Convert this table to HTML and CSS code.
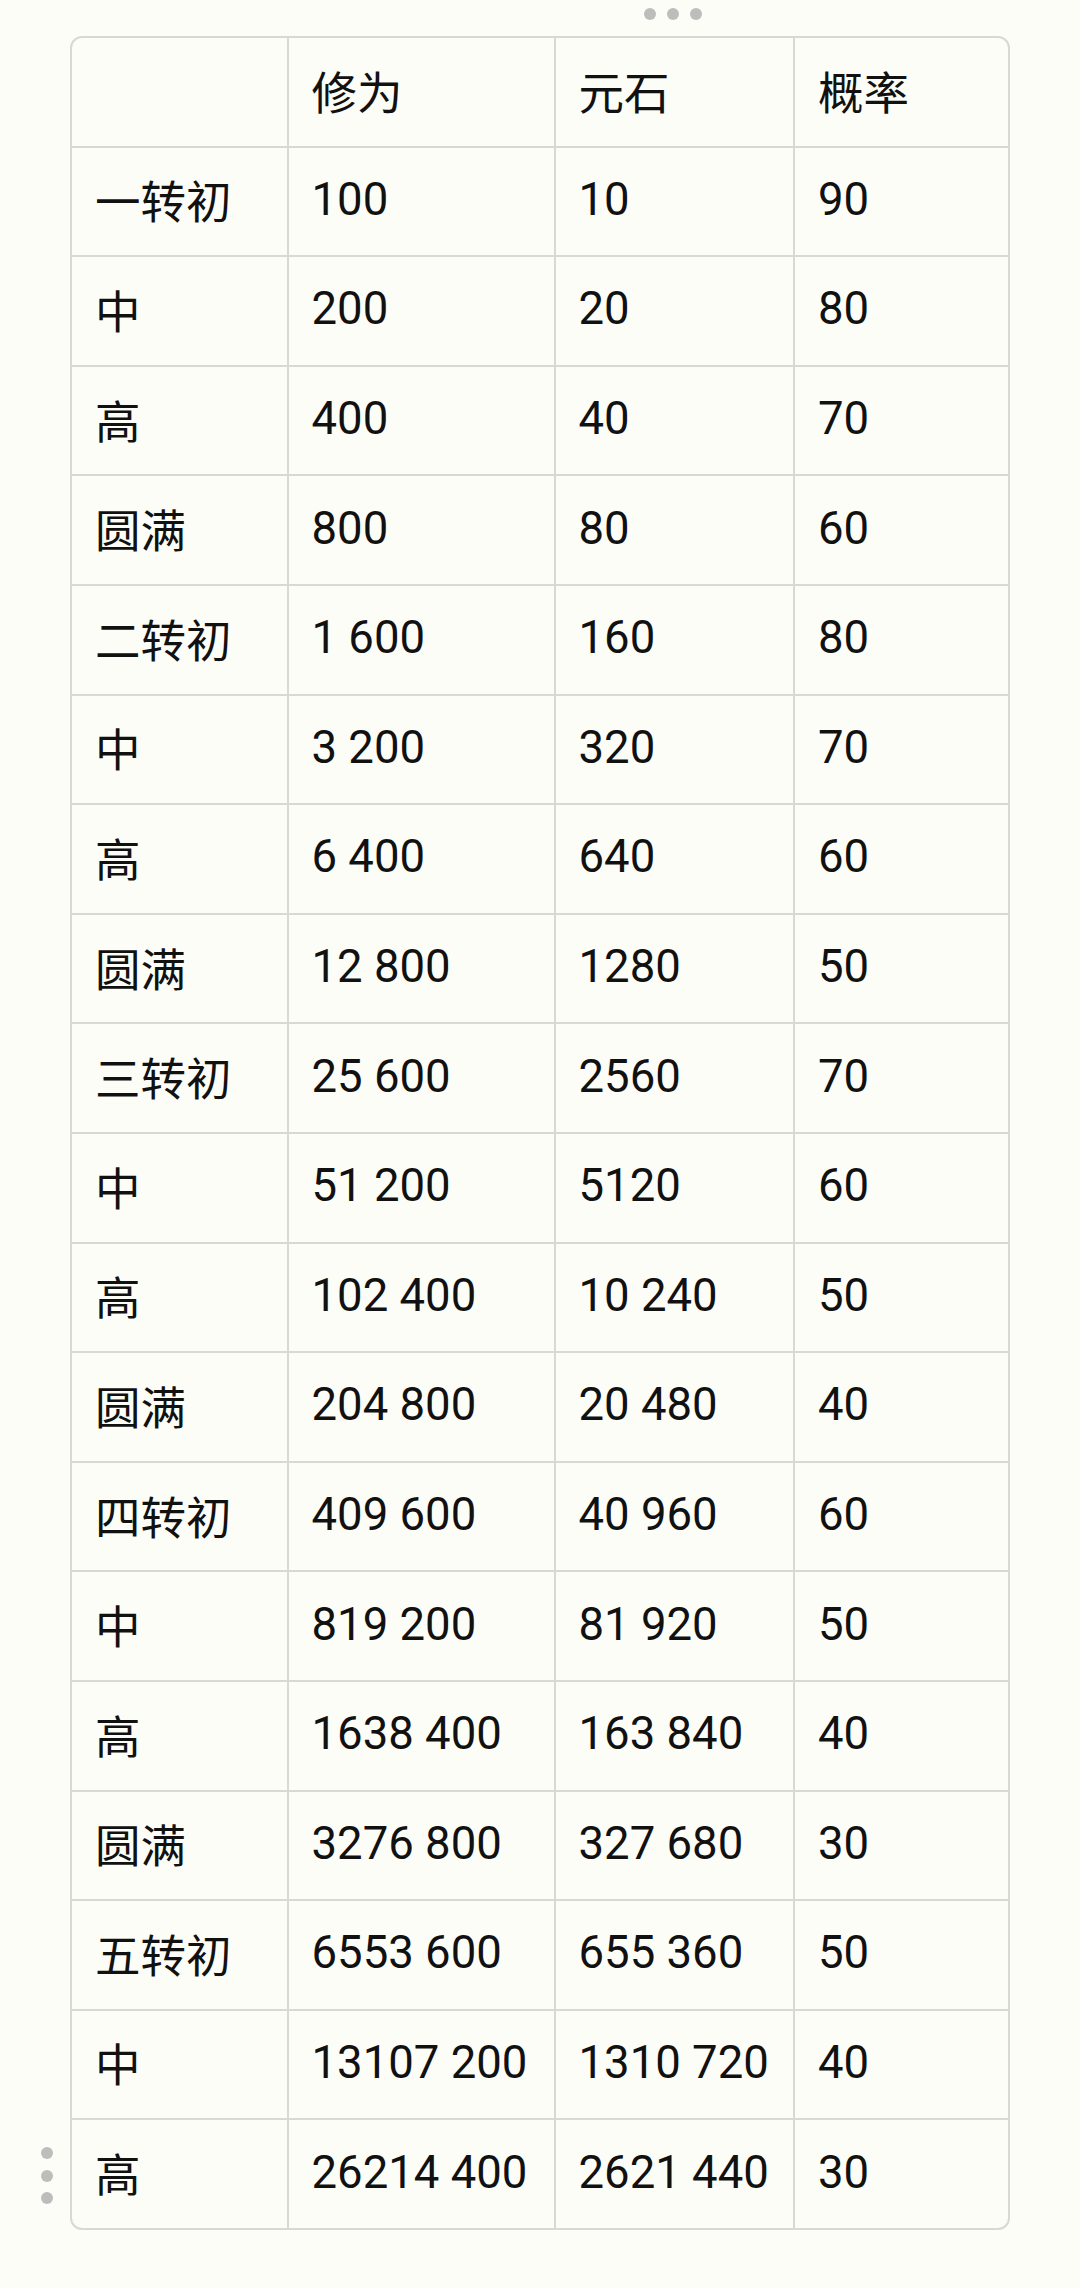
FILE: index.html
```html
<!DOCTYPE html>
<html lang="zh">
<head>
<meta charset="utf-8">
<link rel="stylesheet" href="styles.css">
</head>
<body>
<div class="page">
  <div class="handle-top"><span></span><span></span><span></span></div>
  <div class="table">
    <div class="c"></div><div class="c">修为</div><div class="c">元石</div><div class="c">概率</div>
    <div class="c">一转初</div><div class="c">100</div><div class="c">10</div><div class="c">90</div>
    <div class="c">中</div><div class="c">200</div><div class="c">20</div><div class="c">80</div>
    <div class="c">高</div><div class="c">400</div><div class="c">40</div><div class="c">70</div>
    <div class="c">圆满</div><div class="c">800</div><div class="c">80</div><div class="c">60</div>
    <div class="c">二转初</div><div class="c">1 600</div><div class="c">160</div><div class="c">80</div>
    <div class="c">中</div><div class="c">3 200</div><div class="c">320</div><div class="c">70</div>
    <div class="c">高</div><div class="c">6 400</div><div class="c">640</div><div class="c">60</div>
    <div class="c">圆满</div><div class="c">12 800</div><div class="c">1280</div><div class="c">50</div>
    <div class="c">三转初</div><div class="c">25 600</div><div class="c">2560</div><div class="c">70</div>
    <div class="c">中</div><div class="c">51 200</div><div class="c">5120</div><div class="c">60</div>
    <div class="c">高</div><div class="c">102 400</div><div class="c">10 240</div><div class="c">50</div>
    <div class="c">圆满</div><div class="c">204 800</div><div class="c">20 480</div><div class="c">40</div>
    <div class="c">四转初</div><div class="c">409 600</div><div class="c">40 960</div><div class="c">60</div>
    <div class="c">中</div><div class="c">819 200</div><div class="c">81 920</div><div class="c">50</div>
    <div class="c">高</div><div class="c">1638 400</div><div class="c">163 840</div><div class="c">40</div>
    <div class="c">圆满</div><div class="c">3276 800</div><div class="c">327 680</div><div class="c">30</div>
    <div class="c">五转初</div><div class="c">6553 600</div><div class="c">655 360</div><div class="c">50</div>
    <div class="c">中</div><div class="c">13107 200</div><div class="c">1310 720</div><div class="c">40</div>
    <div class="c">高</div><div class="c">26214 400</div><div class="c">2621 440</div><div class="c">30</div>
  </div>
  <div class="handle-left"><span></span><span></span><span></span></div>
</div>
</body>
</html>
```
FILE: styles.css
```css
html, body {
  margin: 0;
  padding: 0;
  background: #fdfdf7;
}
body {
  width: 1080px;
  height: 2288px;
  overflow: hidden;
  font-family: Roboto, "Noto Sans CJK SC", sans-serif;
  color: #111111;
}
.page {
  position: relative;
  padding-top: 36px;
  padding-left: 70px;
}
.table {
  width: 940px;
  box-sizing: border-box;
  border: 2px solid #d8d8d4;
  border-radius: 12px;
  overflow: hidden;
  display: grid;
  grid-template-columns: 216.5px 267px 239.5px 213px;
}
.c {
  box-sizing: border-box;
  height: 109.6px;
  border-right: 2px solid #d8d8d4;
  border-bottom: 2px solid #d8d8d4;
  padding-left: 23px;
  padding-bottom: 4px;
  display: flex;
  align-items: center;
  font-size: 45.5px;
  white-space: nowrap;
}
.c:nth-child(4n) {
  border-right: none;
}
.c:nth-last-child(-n+4) {
  border-bottom: none;
  height: 107.6px;
}
.handle-top {
  position: absolute;
  top: 8px;
  left: 644px;
  display: flex;
  gap: 11px;
}
.handle-left {
  position: absolute;
  top: 2147px;
  left: 41px;
  display: flex;
  flex-direction: column;
  gap: 10.5px;
}
.handle-top span, .handle-left span {
  display: block;
  width: 12px;
  height: 12px;
  border-radius: 50%;
  background: #bdbdbb;
}
```
